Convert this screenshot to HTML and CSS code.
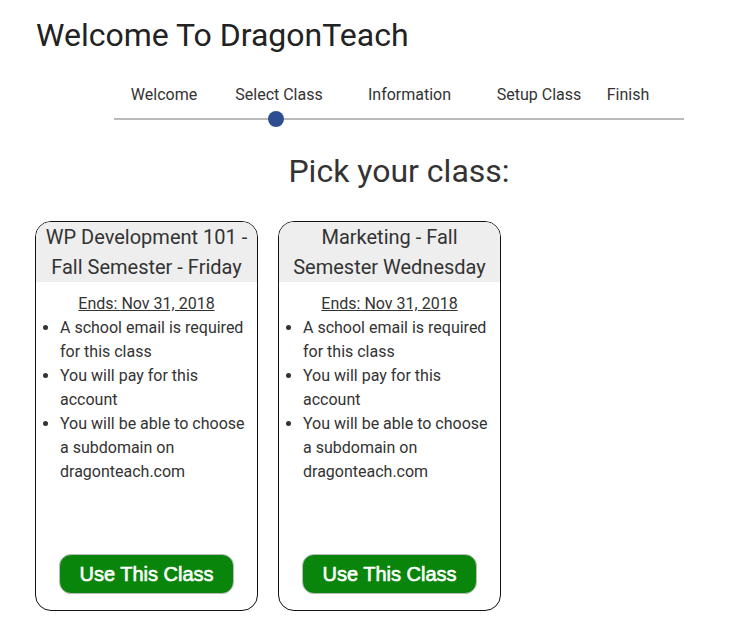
FILE: index.html
```html
<!DOCTYPE html>
<html lang="en">
<head>
    <meta charset="utf-8"/>
    <title>Welcome To DragonTeach</title>
    <link rel="stylesheet" href="styles.css">
</head>
<body>
<div class="wizard">
    <h1 class="title">Welcome To DragonTeach</h1>

    <div class="progress">
        <ul class="steps">
            <li>Welcome</li>
            <li>Select Class</li>
            <li>Information</li>
            <li>Setup Class</li>
            <li>Finish</li>
        </ul>
        <div class="track">
            <span class="dot"></span>
        </div>
    </div>

    <h2 class="pick">Pick your class:</h2>

    <div class="classes">
        <div class="class-card">
            <div class="class-name">WP Development 101 - Fall Semester - Friday</div>
            <p class="ends">Ends: Nov 31, 2018</p>
            <ul class="rules">
                <li>A school email is required for this class</li>
                <li>You will pay for this account</li>
                <li>You will be able to choose a subdomain on dragonteach.com</li>
            </ul>
            <button class="use-class" type="button">Use This Class</button>
        </div>

        <div class="class-card">
            <div class="class-name">Marketing - Fall Semester Wednesday</div>
            <p class="ends">Ends: Nov 31, 2018</p>
            <ul class="rules">
                <li>A school email is required for this class</li>
                <li>You will pay for this account</li>
                <li>You will be able to choose a subdomain on dragonteach.com</li>
            </ul>
            <button class="use-class" type="button">Use This Class</button>
        </div>
    </div>
</div>
</body>
</html>
```

FILE: styles.css
```css
body {
    margin: 0;
    background: #fff;
    font-family: Roboto, "Liberation Sans", sans-serif;
    color: #333;
}

.title {
    margin: 16px 0 0 36px;
    font-size: 32px;
    font-weight: 400;
    line-height: 38px;
    color: #222;
}

.progress {
    width: 570px;
    margin: 31px 0 0 114px;
}

.steps {
    display: grid;
    grid-template-columns: 100px 130px 131px 128px 50px;
    margin: 0;
    padding: 0;
    list-style: none;
    font-size: 16px;
    line-height: 20px;
    text-align: center;
}

.track {
    position: relative;
    height: 2px;
    margin-top: 13px;
    background: #bbb;
}

.dot {
    position: absolute;
    left: 154px;
    top: -7px;
    width: 16px;
    height: 16px;
    border-radius: 50%;
    background: #2d4f91;
}

.pick {
    margin: 32px 0 0 114px;
    width: 570px;
    font-size: 32px;
    font-weight: 400;
    line-height: 38px;
    text-align: center;
    color: #333;
}

.classes {
    display: flex;
    gap: 20px;
    margin: 31px 0 0 35px;
}

.class-card {
    display: flex;
    flex-direction: column;
    width: 223px;
    height: 390px;
    box-sizing: border-box;
    border: 1px solid #111;
    border-radius: 16px;
    overflow: hidden;
}

.class-name {
    padding: 0 6px;
    background: #eee;
    font-size: 20px;
    line-height: 30px;
    text-align: center;
}

.ends {
    margin: 10px 0 0;
    font-size: 16px;
    line-height: 24px;
    text-align: center;
    text-decoration: underline;
}

.rules {
    margin: 0;
    padding: 0 8px 0 24px;
    font-size: 16px;
    line-height: 24px;
}

.use-class {
    align-self: center;
    width: 175px;
    height: 40px;
    margin: auto 0 16px;
    border: 1px solid #bbb;
    border-radius: 12px;
    background: #0a850c;
    color: #fff;
    font-family: "Liberation Sans", Arial, sans-serif;
    font-size: 20px;
    -webkit-text-stroke: 0.6px #fff;
}
```
